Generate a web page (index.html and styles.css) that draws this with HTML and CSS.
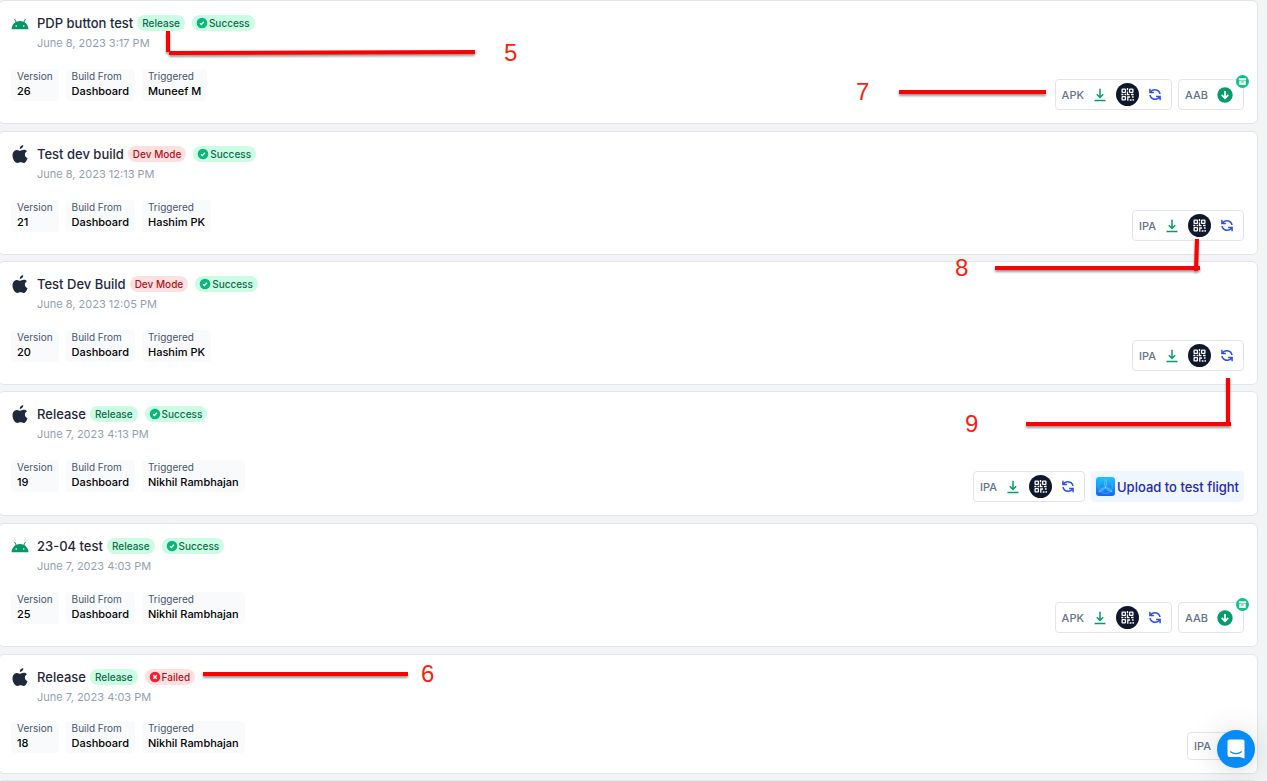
FILE: index.html
```
<!DOCTYPE html>
<html lang="en">
<head>
    <meta charset="UTF-8">
    <meta name="viewport" content="width=device-width, initial-scale=1.0">
    <link rel="stylesheet" href="styles.css">
    <title>Builds</title>
</head>
<body>
    <!-- Shared icons -->
    <svg class="sprite" aria-hidden="true">
        <symbol id="android" viewBox="0 0 18 12">
            <path fill="#069668" d="M.5 11.2C.8 8 2.4 5.500 4.700 4.100L3.100 1.300l.8-.5 1.700 2.900C6.700 3.200 7.800 3 9 3s2.300.2 3.400.7L14.100.8l.8.5-1.600 2.800c2.300 1.400 3.900 3.900 4.200 7.100z"/>
            <circle cx="5.200" cy="8" r=".8" fill="#fff"/>
            <circle cx="12.800" cy="8" r=".8" fill="#fff"/>
        </symbol>
        <symbol id="apple" viewBox="0 0 16 20">
            <path fill="#1e293b" d="M11.300 1c.1 2.100-1.600 4-3.500 3.900C7.600 3 9.400 1.100 11.300 1zM14.900 7.200c-1.300.8-2 1.900-2 3.400 0 1.700 1 3 2.600 3.600-.5 1.500-1.800 4.700-3.900 4.800-1.100 0-1.700-.7-3-.7s-2 .7-3 .7C2.700 19 .5 14.900.5 11.500.5 8 2.600 5.900 5 5.900c1.300 0 2.300.8 3.200.8.8 0 2.100-.9 3.600-.9 1.300 0 2.400.5 3.100 1.400z"/>
        </symbol>
        <symbol id="check" viewBox="0 0 12 12">
            <circle cx="6" cy="6" r="5.300" fill="#07b77b"/>
            <path d="M4 6.200l1.400 1.300 2.600-2.800" fill="none" stroke="#fff" stroke-width="1.300"/>
        </symbol>
        <symbol id="cross" viewBox="0 0 12 12">
            <circle cx="6" cy="6" r="5.300" fill="#fa1c30"/>
            <path d="M4.300 4.300l3.400 3.400M7.700 4.300L4.300 7.700" stroke="#fff" stroke-width="1.500"/>
        </symbol>
        <symbol id="download" viewBox="0 0 12 14">
            <path d="M6 .7v8.600M2.800 6.300L6 9.500l3.200-3.200M.5 12.600h11" fill="none" stroke="#069b6b" stroke-width="1.500"/>
        </symbol>
        <symbol id="qr" viewBox="0 0 23 23">
            <circle cx="11.500" cy="11.500" r="11.500" fill="#0f172a"/>
            <g fill="none" stroke="#fff" stroke-width="1.300">
                <rect x="6.100" y="6.100" width="3.300" height="3.300" rx=".5"/>
                <rect x="13.600" y="6.100" width="3.300" height="3.300" rx=".5"/>
                <rect x="6.100" y="13.600" width="3.300" height="3.300" rx=".5"/>
                <path d="M11.500 5v2.200M11.500 8.500v3.200h2M5.300 11.500h2M8.600 11.500h1.600M15 11.500h2.600M11.800 17.700v-3.700h2.300M13.700 17h1.800M15.900 14h1.700M17.200 16v1.700"/>
            </g>
        </symbol>
        <symbol id="refresh" viewBox="0 0 12 13">
            <path d="M.9.700v3.900h4M1.200 4.300C3.300.7 8.500.9 10.300 4.100q.6 1.100.6 2M11.100 12.300V8.400h-4M10.800 8.700C8.700 12.300 3.500 12.100 1.700 8.900q-.6-1.100-.6-2" fill="none" stroke="#2f50ef" stroke-width="1.500"/>
        </symbol>
        <symbol id="down-circle" viewBox="0 0 16 16">
            <circle cx="8" cy="8" r="7.700" fill="#069b6b"/>
            <path d="M8 4v7.200M4.700 7.900L8 11.200l3.300-3.300" fill="none" stroke="#fff" stroke-width="1.700"/>
        </symbol>
        <symbol id="archive" viewBox="0 0 13 13">
            <circle cx="6.500" cy="6.500" r="6.500" fill="#0cc384"/>
            <path d="M2.800 3.200h7.400v1.800H2.800zM3.300 5.500h6.400v4.400H3.300z" fill="#fff"/>
            <path d="M5.200 7h2.600" stroke="#0cc384" stroke-width="1"/>
        </symbol>
    </svg>

    <main class="build-list">
        <article class="build build-android">
            <div class="build-info">
                <svg class="platform platform-android"><use href="#android"/></svg>
                <div class="build-head">
                    <h2>PDP button test</h2>
                    <span class="badge green">Release</span>
                    <span class="badge green status"><svg><use href="#check"/></svg>Success</span>
                </div>
                <p class="date">June 8, 2023 3:17 PM</p>
                <dl class="details">
                    <div><dt>Version</dt><dd>26</dd></div>
                    <div><dt>Build From</dt><dd>Dashboard</dd></div>
                    <div><dt>Triggered</dt><dd>Muneef M</dd></div>
                </dl>
            </div>
            <div class="actions">
                <div class="group">
                    <span>APK</span>
                    <button aria-label="Download APK"><svg class="icon-download"><use href="#download"/></svg></button>
                    <button aria-label="Show QR code"><svg class="icon-qr"><use href="#qr"/></svg></button>
                    <button aria-label="Rebuild"><svg class="icon-refresh"><use href="#refresh"/></svg></button>
                </div>
                <div class="group aab">
                    <span>AAB</span>
                    <button aria-label="Download AAB"><svg class="icon-down"><use href="#down-circle"/></svg></button>
                    <svg class="archive"><use href="#archive"/></svg>
                </div>
            </div>
        </article>

        <article class="build">
            <div class="build-info">
                <svg class="platform"><use href="#apple"/></svg>
                <div class="build-head">
                    <h2>Test dev build</h2>
                    <span class="badge red">Dev Mode</span>
                    <span class="badge green status"><svg><use href="#check"/></svg>Success</span>
                </div>
                <p class="date">June 8, 2023 12:13 PM</p>
                <dl class="details">
                    <div><dt>Version</dt><dd>21</dd></div>
                    <div><dt>Build From</dt><dd>Dashboard</dd></div>
                    <div><dt>Triggered</dt><dd>Hashim PK</dd></div>
                </dl>
            </div>
            <div class="actions">
                <div class="group">
                    <span>IPA</span>
                    <button aria-label="Download IPA"><svg class="icon-download"><use href="#download"/></svg></button>
                    <button aria-label="Show QR code"><svg class="icon-qr"><use href="#qr"/></svg></button>
                    <button aria-label="Rebuild"><svg class="icon-refresh"><use href="#refresh"/></svg></button>
                </div>
            </div>
        </article>

        <article class="build">
            <div class="build-info">
                <svg class="platform"><use href="#apple"/></svg>
                <div class="build-head">
                    <h2>Test Dev Build</h2>
                    <span class="badge red">Dev Mode</span>
                    <span class="badge green status"><svg><use href="#check"/></svg>Success</span>
                </div>
                <p class="date">June 8, 2023 12:05 PM</p>
                <dl class="details">
                    <div><dt>Version</dt><dd>20</dd></div>
                    <div><dt>Build From</dt><dd>Dashboard</dd></div>
                    <div><dt>Triggered</dt><dd>Hashim PK</dd></div>
                </dl>
            </div>
            <div class="actions">
                <div class="group">
                    <span>IPA</span>
                    <button aria-label="Download IPA"><svg class="icon-download"><use href="#download"/></svg></button>
                    <button aria-label="Show QR code"><svg class="icon-qr"><use href="#qr"/></svg></button>
                    <button aria-label="Rebuild"><svg class="icon-refresh"><use href="#refresh"/></svg></button>
                </div>
            </div>
        </article>

        <article class="build build-flight">
            <div class="build-info">
                <svg class="platform"><use href="#apple"/></svg>
                <div class="build-head">
                    <h2>Release</h2>
                    <span class="badge green">Release</span>
                    <span class="badge green status"><svg><use href="#check"/></svg>Success</span>
                </div>
                <p class="date">June 7, 2023 4:13 PM</p>
                <dl class="details">
                    <div><dt>Version</dt><dd>19</dd></div>
                    <div><dt>Build From</dt><dd>Dashboard</dd></div>
                    <div><dt>Triggered</dt><dd>Nikhil Rambhajan</dd></div>
                </dl>
            </div>
            <div class="actions">
                <div class="group">
                    <span>IPA</span>
                    <button aria-label="Download IPA"><svg class="icon-download"><use href="#download"/></svg></button>
                    <button aria-label="Show QR code"><svg class="icon-qr"><use href="#qr"/></svg></button>
                    <button aria-label="Rebuild"><svg class="icon-refresh"><use href="#refresh"/></svg></button>
                </div>
                <button class="upload">
                    <svg viewBox="0 0 19 19">
                        <defs>
                            <linearGradient id="sky" x1="0" y1="0" x2="0" y2="1">
                                <stop offset="0" stop-color="#18c5fb"/>
                                <stop offset="1" stop-color="#1768ee"/>
                            </linearGradient>
                        </defs>
                        <rect width="19" height="19" rx="3" fill="url(#sky)"/>
                        <circle cx="9.500" cy="9.500" r="7" fill="none" stroke="#4fb4fa" stroke-width=".6"/>
                        <path d="M9.500 10.500C8.300 7.500 8.500 4.500 9.700 2.500c1.300 2.500 1 5.500-.2 8zM9.500 10.500c-1.800 2.800-4 4-6.700 4.300 1.300-2.400 3.500-4 6.700-4.300zM9.500 10.500c3.200.3 5.400 1.900 6.700 4.300-2.700-.3-4.900-1.500-6.700-4.300z" fill="#2b9bf7" stroke="#83d5ff" stroke-width=".6"/>
                    </svg>
                    Upload to test flight
                </button>
            </div>
        </article>

        <article class="build build-android">
            <div class="build-info">
                <svg class="platform platform-android"><use href="#android"/></svg>
                <div class="build-head">
                    <h2>23-04 test</h2>
                    <span class="badge green">Release</span>
                    <span class="badge green status"><svg><use href="#check"/></svg>Success</span>
                </div>
                <p class="date">June 7, 2023 4:03 PM</p>
                <dl class="details">
                    <div><dt>Version</dt><dd>25</dd></div>
                    <div><dt>Build From</dt><dd>Dashboard</dd></div>
                    <div><dt>Triggered</dt><dd>Nikhil Rambhajan</dd></div>
                </dl>
            </div>
            <div class="actions">
                <div class="group">
                    <span>APK</span>
                    <button aria-label="Download APK"><svg class="icon-download"><use href="#download"/></svg></button>
                    <button aria-label="Show QR code"><svg class="icon-qr"><use href="#qr"/></svg></button>
                    <button aria-label="Rebuild"><svg class="icon-refresh"><use href="#refresh"/></svg></button>
                </div>
                <div class="group aab">
                    <span>AAB</span>
                    <button aria-label="Download AAB"><svg class="icon-down"><use href="#down-circle"/></svg></button>
                    <svg class="archive"><use href="#archive"/></svg>
                </div>
            </div>
        </article>

        <article class="build build-failed">
            <div class="build-info">
                <svg class="platform"><use href="#apple"/></svg>
                <div class="build-head">
                    <h2>Release</h2>
                    <span class="badge green">Release</span>
                    <span class="badge red status"><svg><use href="#cross"/></svg>Failed</span>
                </div>
                <p class="date">June 7, 2023 4:03 PM</p>
                <dl class="details">
                    <div><dt>Version</dt><dd>18</dd></div>
                    <div><dt>Build From</dt><dd>Dashboard</dd></div>
                    <div><dt>Triggered</dt><dd>Nikhil Rambhajan</dd></div>
                </dl>
            </div>
            <div class="actions">
                <div class="group">
                    <span>IPA</span>
                    <button aria-label="Rebuild"><svg class="icon-refresh"><use href="#refresh"/></svg></button>
                </div>
            </div>
        </article>

        <article class="build"></article>
    </main>

    <!-- Numbered callouts drawn over the list -->
    <svg class="callouts" width="1267" height="781">
        <g class="callout-lines">
            <path d="M168 31v21M169 53L475 52"/>
            <path d="M899 92h147"/>
            <path d="M1197 239l-1 32M995 268h205"/>
            <path d="M1228 378v47M1026 424h205"/>
            <path d="M203 674h205"/>
        </g>
        <text x="504" y="61">5</text>
        <text x="856" y="100">7</text>
        <text x="955" y="276">8</text>
        <text x="965" y="432">9</text>
        <text x="421" y="682">6</text>
    </svg>

    <button class="chat" aria-label="Open chat">
        <svg viewBox="0 0 18 20">
            <path d="M2.500.5h13a2 2 0 0 1 2 2V19.500l-4.500-1.500H2.500a2 2 0 0 1-2-2V2.500a2 2 0 0 1 2-2z" fill="#fff"/>
            <path d="M3.500 12.800c3 2.500 8 2.500 11 0" fill="none" stroke="#078bf9" stroke-width="1.200" stroke-linecap="round"/>
        </svg>
    </button>
</body>
</html>
```
FILE: styles.css
```
* {
    box-sizing: border-box;
}
body {
    margin: 0;
    height: 100vh;
    overflow: hidden;
    background-color: #f3f4f6;
    font-family: Inter, "Liberation Sans", sans-serif;
    color: #1e293b;
}
h2, p, dl, dd {
    margin: 0;
}
button {
    display: flex;
    align-items: center;
    padding: 0;
    border: none;
    background: none;
    font-family: inherit;
    cursor: pointer;
}
.sprite {
    position: absolute;
    width: 0;
    height: 0;
}

/* Build cards */
.build-list {
    display: flex;
    flex-direction: column;
    gap: 6px;
    height: 100%;
    margin-left: -2px;
    padding-right: 9px;
    overflow: hidden;
}
.build {
    display: flex;
    flex-shrink: 0;
    justify-content: space-between;
    min-height: 124px;
    padding: 13px 13px 13px 12px;
    border: 1px solid #e3e5ea;
    border-radius: 6px;
    background-color: #fff;
}
.build-android {
    margin-bottom: 1px;
}
.build-flight {
    min-height: 125px;
    margin-bottom: 1px;
}
.build-failed {
    min-height: 120px;
}
.build-info {
    display: grid;
    grid-template-columns: 26px auto;
    grid-template-rows: 18px 20px auto;
    align-content: start;
}
.platform {
    width: 16px;
    height: 20px;
    margin: -1px 0 0 1px;
}
.platform-android {
    width: 18px;
    height: 12px;
    margin: 4px 0 0;
}
.build-head {
    display: flex;
    align-items: center;
    height: 18px;
}
h2 {
    margin-right: 4px;
    font-size: 13px;
    font-weight: 500;
    line-height: 18px;
}
.badge {
    display: flex;
    align-items: center;
    height: 16px;
    margin-right: 7px;
    padding: 0 5px;
    border-radius: 8px;
    font-size: 10px;
    font-weight: 500;
}
.status {
    padding-left: 4px;
}
.status svg {
    width: 12px;
    height: 12px;
    margin-right: 1px;
}
.green {
    background-color: #cbfde4;
    color: #12694d;
}
.red {
    background-color: #fee0e1;
    color: #b01218;
}
.date {
    grid-column: 2;
    color: #94a0b2;
    font-size: 11px;
    line-height: 22px;
}

/* Version, source and author */
.details {
    display: flex;
    grid-column: 1 / 3;
    gap: 7px;
    margin-top: 17px;
}
.details div {
    height: 32px;
    padding: 1px 6px 0;
    border-radius: 4px;
    background-color: #f9fafc;
}
.build-failed .details {
    margin-top: 15px;
}
dt {
    color: #475569;
    font-size: 10px;
    line-height: 12px;
}
dd {
    color: #000;
    font-size: 11px;
    font-weight: 500;
    line-height: 18px;
}

/* Downloads */
.actions {
    display: flex;
    align-items: flex-end;
    gap: 6px;
}
.group {
    position: relative;
    display: flex;
    align-items: center;
    gap: 10px;
    height: 31px;
    padding: 0 10px 0 6px;
    border: 1px solid #e3e5ea;
    border-radius: 4px;
    color: #64748b;
    font-size: 11px;
    font-weight: 500;
}
.aab {
    gap: 9px;
}
.build-failed .group {
    height: 28px;
}
.icon-download {
    width: 12px;
    height: 14px;
}
.icon-qr {
    width: 23px;
    height: 23px;
}
.icon-refresh {
    width: 12px;
    height: 13px;
}
.icon-down {
    width: 16px;
    height: 16px;
}
.archive {
    position: absolute;
    top: -5px;
    right: -6px;
    width: 13px;
    height: 13px;
}
.upload {
    gap: 2px;
    height: 31px;
    padding: 0 5px;
    border-radius: 4px;
    background-color: #eff6ff;
    color: #2728aa;
    font-size: 13px;
    font-weight: 500;
}
.upload svg {
    width: 19px;
    height: 19px;
}

/* Callouts */
.callouts {
    position: absolute;
    top: 0;
    left: 0;
    pointer-events: none;
}
.callouts text {
    fill: #fb1f0e;
    font-family: "Liberation Sans", Arial, sans-serif;
    font-size: 24px;
}
.callout-lines {
    fill: none;
    stroke: #fe0000;
    stroke-width: 4px;
    filter: drop-shadow(0 2px 1px rgba(0, 0, 0, 0.4));
}

/* Chat launcher */
.chat {
    position: fixed;
    right: 12px;
    bottom: 13px;
    justify-content: center;
    width: 38px;
    height: 38px;
    border-radius: 50%;
    background-color: #078bf9;
    box-shadow: 0 1px 6px rgba(0, 0, 0, 0.06), 0 2px 32px rgba(0, 0, 0, 0.16);
}
.chat svg {
    width: 18px;
    height: 20px;
}
```
